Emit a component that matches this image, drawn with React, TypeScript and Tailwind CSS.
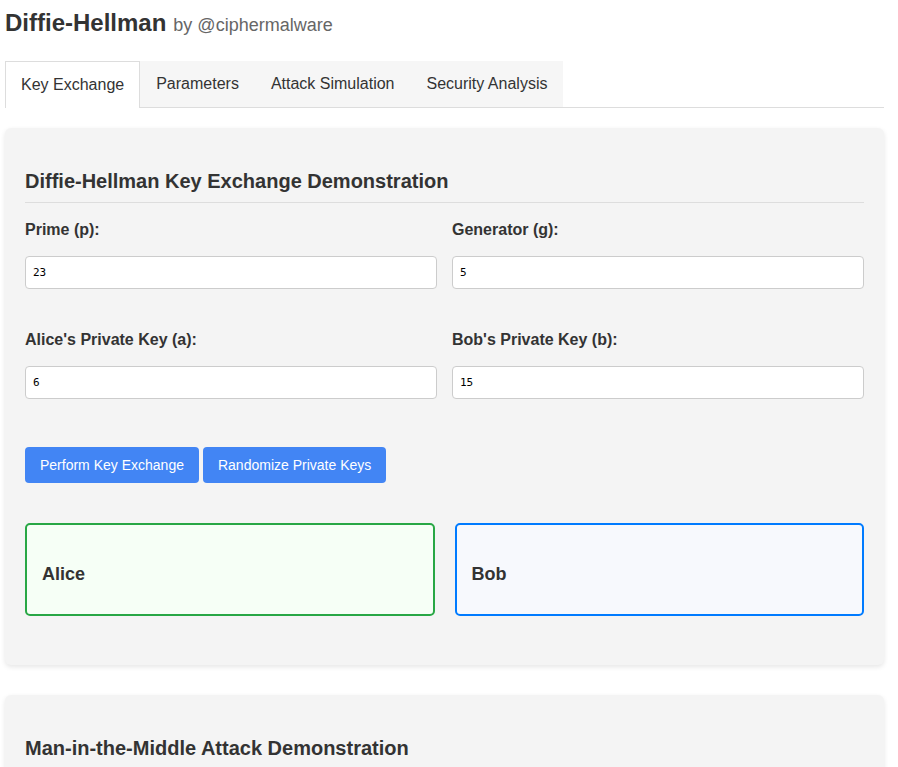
import React, { useState } from 'react';

const tabs = ['Key Exchange', 'Parameters', 'Attack Simulation', 'Security Analysis'];

const Field: React.FC<{ label: string; value: string }> = ({ label, value }) => (
  <div className="flex flex-col">
    <label className="text-[16px] leading-[18px] font-bold text-[#333] mb-[17px]">{label}</label>
    <input
      defaultValue={value}
      className="h-[33px] w-full bg-white border border-[#ccc] rounded-[4px] px-[7px] text-[11px] text-black outline-none"
      style={{ fontFamily: '"DejaVu Sans Mono", "Liberation Mono", monospace' }}
    />
  </div>
);

export default function App() {
  const [active, setActive] = useState(0);

  return (
    <div className="min-h-screen bg-white text-[#333]" style={{ fontFamily: '"Liberation Sans", Arial, sans-serif' }}>
      <div className="w-[879px] ml-[5px]">
        <h1 className="pt-[9px] h-[61px] flex items-baseline gap-[7px]">
          <span className="text-[24px] font-bold text-[#333] leading-[27px]">Diffie-Hellman</span>
          <span className="text-[18px] text-[#666]">by @ciphermalware</span>
        </h1>

        <div className="flex border-b border-[#ddd] h-[47px]">
          {tabs.map((t, i) => (
            <button
              key={t}
              onClick={() => setActive(i)}
              className={
                i === active
                  ? 'px-[15px] h-[47px] bg-white border border-b-0 border-[#ddd] text-[16px] text-[#333] -mb-px'
                  : 'px-[16px] h-[46px] bg-[#f6f6f6] text-[16px] text-[#333]'
              }
            >
              {t}
            </button>
          ))}
        </div>

        <div className="mt-[20px] bg-[#f4f4f4] rounded-[6px] shadow-[0_2px_5px_rgba(0,0,0,0.1)] px-[20px] pt-[20px] pb-[49px]">
          <h2 className="mt-[22px] text-[20px] leading-[23px] font-bold text-[#333] pb-[9px] border-b border-[#ddd]">
            Diffie-Hellman Key Exchange Demonstration
          </h2>

          <div className="grid grid-cols-2 gap-x-[15px] mt-[18px]">
            <Field label="Prime (p):" value="23" />
            <Field label="Generator (g):" value="5" />
          </div>
          <div className="grid grid-cols-2 gap-x-[15px] mt-[42px]">
            <Field label="Alice's Private Key (a):" value="6" />
            <Field label="Bob's Private Key (b):" value="15" />
          </div>

          <div className="flex gap-[4px] mt-[48px]">
            <button className="h-[36px] px-[15px] bg-[#4285f4] text-white text-[14px] rounded-[4px]">
              Perform Key Exchange
            </button>
            <button className="h-[36px] px-[15px] bg-[#4285f4] text-white text-[14px] rounded-[4px]">
              Randomize Private Keys
            </button>
          </div>

          <div className="grid grid-cols-2 gap-x-[20px] mt-[40px]">
            <div className="h-[93px] border-2 border-[#28a745] bg-[#f6fff6] rounded-[5px] flex items-center px-[15px] pt-[10px]">
              <h3 className="text-[18px] font-bold text-[#333]">Alice</h3>
            </div>
            <div className="h-[93px] border-2 border-[#007bff] bg-[#f7f9fd] rounded-[5px] flex items-center px-[15px] pt-[10px]">
              <h3 className="text-[18px] font-bold text-[#333]">Bob</h3>
            </div>
          </div>
        </div>

        <div className="mt-[30px] bg-[#f4f4f4] rounded-[6px] shadow-[0_2px_5px_rgba(0,0,0,0.1)] px-[20px] pt-[20px] pb-[40px]">
          <h2 className="mt-[22px] text-[20px] leading-[23px] font-bold text-[#333] pb-[9px] border-b border-[#ddd]">
            Man-in-the-Middle Attack Demonstration
          </h2>
        </div>
      </div>
    </div>
  );
}
